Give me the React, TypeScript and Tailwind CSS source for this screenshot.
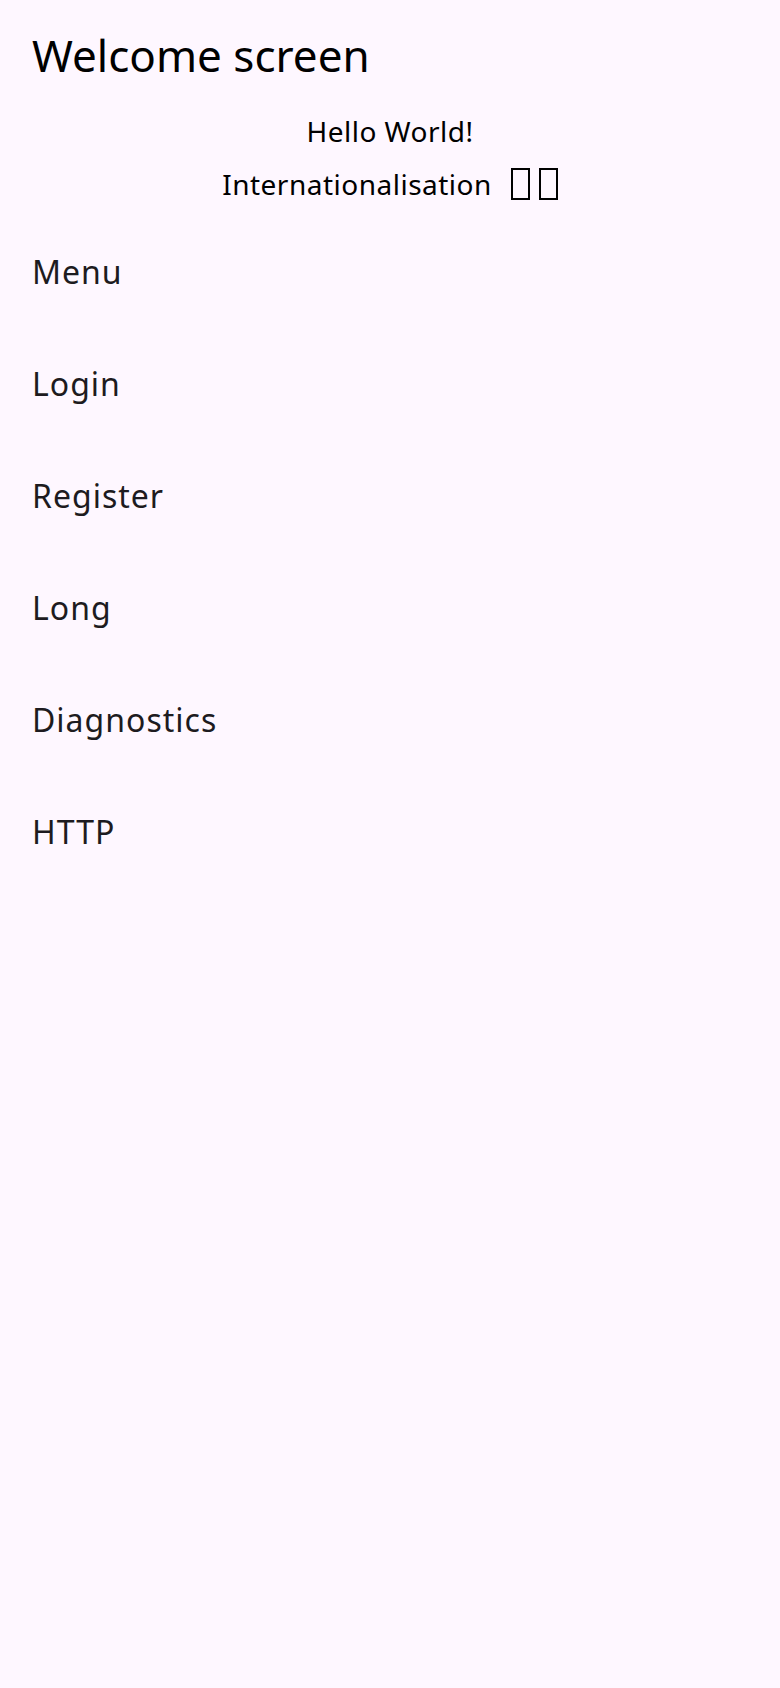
import React from "react";

const items = ["Menu", "Login", "Register", "Long", "Diagnostics", "HTTP"];

export default function App() {
  return (
    <div
      className="min-h-[1688px] w-[780px] bg-[#fef7ff] text-black"
      style={{ fontFamily: '"Noto Sans", "DejaVu Sans", sans-serif' }}
    >
      <header className="flex h-[111px] items-center px-[32px]">
        <h1 className="text-[44px] leading-[1.362] font-normal text-black">Welcome screen</h1>
      </header>
      <main className="flex flex-col">
        <div className="flex h-[40px] items-center justify-center text-[28px] leading-[40px] tracking-[0.5px] text-black">
          Hello World!
        </div>
        <div className="flex h-[65px] items-center justify-center">
          <span className="text-[28px] leading-[40px] tracking-[0.5px] text-black">Internationalisation</span>
          <span className="ml-[19px] flex items-center gap-[9px]">
            <span className="inline-block h-[32px] w-[19px] border-[2.5px] border-black" />
            <span className="inline-block h-[32px] w-[19px] border-[2.5px] border-black" />
          </span>
        </div>
        <ul className="flex flex-col">
          {items.map((it) => (
            <li
              key={it}
              className="flex h-[112px] items-center px-[32px] text-[32px] leading-[48px] tracking-[1px] text-[#1d1b20]"
            >
              {it}
            </li>
          ))}
        </ul>
      </main>
    </div>
  );
}
